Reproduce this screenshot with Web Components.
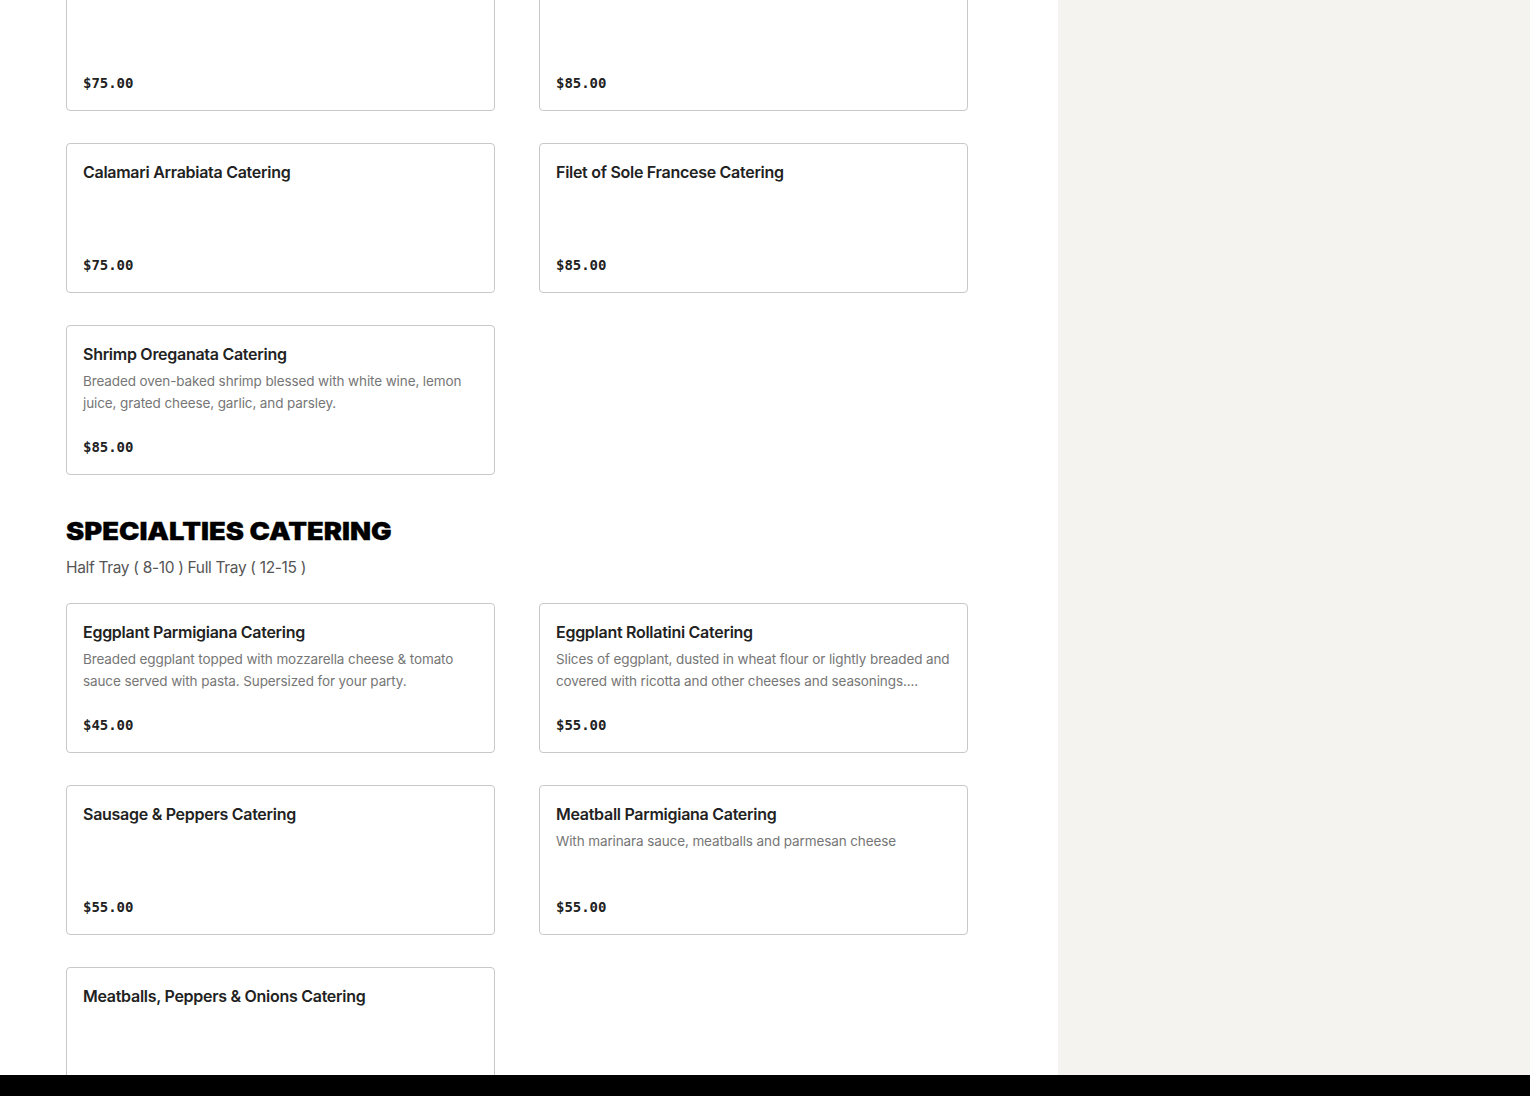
<!DOCTYPE html>
<html>
<head>
<meta charset="utf-8">
<style>
  html, body { margin: 0; padding: 0; background: #fff; height: 100%; overflow: hidden; }
</style>
</head>
<body>
<menu-page>
  <menu-grid class="first">
    <menu-card price="$75.00"></menu-card>
    <menu-card price="$85.00"></menu-card>
    <menu-card name="Calamari Arrabiata Catering" price="$75.00"></menu-card>
    <menu-card name="Filet of Sole Francese Catering" price="$85.00"></menu-card>
    <menu-card name="Shrimp Oreganata Catering" price="$85.00">Breaded oven-baked shrimp blessed with white wine, lemon juice, grated cheese, garlic, and parsley.</menu-card>
  </menu-grid>
  <menu-section title="SPECIALTIES CATERING" note="Half Tray ( 8-10 ) Full Tray ( 12-15 )">
    <menu-grid>
      <menu-card name="Eggplant Parmigiana Catering" price="$45.00">Breaded eggplant topped with mozzarella cheese &amp; tomato sauce served with pasta. Supersized for your party.</menu-card>
      <menu-card name="Eggplant Rollatini Catering" price="$55.00">Slices of eggplant, dusted in wheat flour or lightly breaded and covered with ricotta and other cheeses and seasonings....</menu-card>
      <menu-card name="Sausage &amp; Peppers Catering" price="$55.00"></menu-card>
      <menu-card name="Meatball Parmigiana Catering" price="$55.00">With marinara sauce, meatballs and parmesan cheese</menu-card>
      <menu-card name="Meatballs, Peppers &amp; Onions Catering" price="$55.00"></menu-card>
    </menu-grid>
  </menu-section>
</menu-page>
<script>
class MenuPage extends HTMLElement {
    constructor() {
        super();
        this.attachShadow({ mode: 'open' });
        this.shadowRoot.innerHTML = `
            <style>
                :host {
                    display: grid;
                    grid-template-columns: 1058px 472px;
                    grid-template-rows: 1075px 21px;
                    width: 1530px;
                    height: 1096px;
                    overflow: hidden;
                }
                .main { overflow: hidden; padding-left: 66px; }
                /* page is scrolled, first row is cut by the top edge */
                .scroll { margin-top: -39px; width: 902px; }
                .side { background: #f4f3ef; }
                .bar { grid-column: 1 / 3; background: #000; }
            </style>
            <div class="main"><div class="scroll"><slot></slot></div></div>
            <div class="side"></div>
            <div class="bar"></div>
        `;
    }
}

class MenuSection extends HTMLElement {
    constructor() {
        super();
        this.attachShadow({ mode: 'open' });
    }

    connectedCallback() {
        const title = this.getAttribute('title') || '';
        const note = this.getAttribute('note') || '';
        this.shadowRoot.innerHTML = `
            <style>
                :host { display: block; margin-top: 41px; }
                h2 {
                    margin: 0;
                    font: 900 24px/32px Inter, "Liberation Sans", sans-serif;
                    color: #000;
                    white-space: nowrap;
                    -webkit-text-stroke: 0.3px #000;
                    /* the original face is an extended grotesque */
                    transform: scaleX(1.14);
                    transform-origin: left center;
                }
                p {
                    margin: 8px 0 23px;
                    font: 400 15.5px/24px Inter, "Liberation Sans", sans-serif;
                    letter-spacing: -0.33px;
                    color: #555;
                }
            </style>
            <h2>${title}</h2>
            <p>${note}</p>
            <slot></slot>
        `;
    }
}

class MenuGrid extends HTMLElement {
    constructor() {
        super();
        this.attachShadow({ mode: 'open' });
        this.shadowRoot.innerHTML = `
            <style>
                :host {
                    display: grid;
                    grid-template-columns: 429px 429px;
                    column-gap: 44px;
                    row-gap: 32px;
                    align-items: start;
                }
            </style>
            <slot></slot>
        `;
    }
}

class MenuCard extends HTMLElement {
    constructor() {
        super();
        this.attachShadow({ mode: 'open' });
    }

    connectedCallback() {
        const name = this.getAttribute('name') || '';
        const price = this.getAttribute('price') || '';
        this.shadowRoot.innerHTML = `
            <style>
                :host {
                    display: flex;
                    flex-direction: column;
                    box-sizing: border-box;
                    height: 150px;
                    padding: 17px 16px 18px;
                    background: #fff;
                    border: 1px solid #c8c8c8;
                    border-radius: 4px;
                }
                .name {
                    font: 600 16px/22px Inter, "Liberation Sans", sans-serif;
                    letter-spacing: -0.28px;
                    color: #222;
                    min-height: 22px;
                }
                .desc {
                    margin-top: 5px;
                    flex: 1;
                    font: 400 13.5px/22px Inter, "Liberation Sans", sans-serif;
                    letter-spacing: -0.11px;
                    color: #767676;
                }
                .price {
                    font: 700 14px/18px "DejaVu Sans Mono", "Liberation Mono", monospace;
                    letter-spacing: -0.03px;
                    color: #222;
                }
            </style>
            <div class="name">${name}</div>
            <div class="desc"><slot></slot></div>
            <div class="price">${price}</div>
        `;
    }
}

customElements.define('menu-page', MenuPage);
customElements.define('menu-section', MenuSection);
customElements.define('menu-grid', MenuGrid);
customElements.define('menu-card', MenuCard);
</script>
</body>
</html>
